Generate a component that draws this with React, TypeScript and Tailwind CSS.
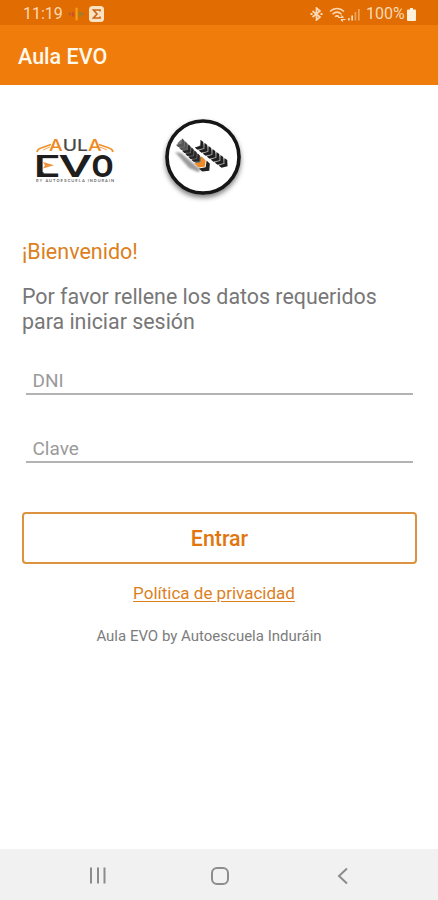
type FieldProps = {
  label: string;
  type: "text" | "password";
};

const LEFT_TRACK = [0, 1, 2, 3, 4, 5];
const RIGHT_TRACK = [0, 1, 2, 3, 4, 5, 6];

function StatusBar() {
  return (
    <div className="flex h-[25px] items-center bg-[#e06c02] pl-[23px] pr-[22px] pt-[3px] text-[#fbd9b4]">
      <span className="w-[40px] whitespace-nowrap text-[16px] leading-none">11:19</span>
      <svg className="ml-[5px]" width="16" height="16" viewBox="0 0 16 16" aria-hidden>
        <circle cx="2" cy="8" r="1.3" fill="#a8604c" />
        <rect x="4.2" y="6" width="2" height="5" rx="1" fill="#d94a25" />
        <rect x="7.6" y="1.5" width="2" height="13" rx="1" fill="#f2a516" />
        <rect x="11" y="5.5" width="2" height="5.5" rx="1" fill="#7e8c3c" />
        <circle cx="15" cy="8" r="1" fill="#8d7550" />
      </svg>
      <svg className="ml-[5px]" width="15" height="16" viewBox="0 0 15 16" aria-hidden>
        <rect width="15" height="16" rx="3.5" fill="#fde3c4" />
        <path d="M11 5.5V4H4.5L8 8l-3.5 4H11v-1.5" fill="none" stroke="#c9681a" strokeWidth="1.7" />
      </svg>
      <div className="ml-auto flex items-center">
        <svg width="13" height="14" viewBox="0 0 13 14" fill="none" stroke="currentColor" strokeWidth="1.7" aria-hidden>
          <path d="M2.5 4l7.5 6-3.5 3V1L10 4l-7.5 6" />
          <path d="M.5 7h2M10.5 7h2" strokeWidth="1.8" />
        </svg>
        <svg className="ml-[6px]" width="18" height="15" viewBox="0 0 18 15" fill="none" stroke="currentColor" aria-hidden>
          <path d="M1 4.5C5 .6 11 .6 15 4.5M3.5 7.2c2.8-2.6 6.2-2.6 9 0M6 9.8c1.4-1.2 2.8-1.2 4 0" strokeWidth="1.5" />
          <path d="M9 10.5h5.5M12 8.5l2.5 2M16.5 12.5H12M14 14.5l-2-2" strokeWidth="1.2" />
        </svg>
        <svg className="ml-[1px]" width="12" height="13" viewBox="0 0 12 13" fill="currentColor" aria-hidden>
          <path d="M0 10h1.7v2.5H0zM3.3 7.5H5v5H3.3z" />
          <path d="M6.6 4h1.7v8.5H6.6zM10 1h1.7v11.5H10z" opacity=".5" />
        </svg>
        <span className="ml-[6px] w-[38px] whitespace-nowrap text-[16px] leading-none">100%</span>
        <svg className="ml-[3px]" width="9" height="13" viewBox="0 0 9 13" fill="#fff0dc" aria-hidden>
          <path d="M3 0h3v1.5h2q1 0 1 1V12q0 1-1 1H1q-1 0-1-1V2.5q0-1 1-1h2z" />
        </svg>
      </div>
    </div>
  );
}

function AulaLogo() {
  return (
    <svg width="82" height="58" viewBox="0 -8 82 58" aria-label="Aula EVO">
      <g fill="none" stroke="#ef922c" strokeWidth="1.7">
        <path d="M3 14q.5-3 4-4l10-3.5" />
        <path d="M79 14q-.5-3-4-4L65 6.5" />
      </g>
      <path d="M9 12l7-3M73 12l-7-3" stroke="#f4b26a" strokeWidth="1.2" />
      <text x="0" y="13" transform="translate(15 0) scale(1.21 1)" fontFamily="Inter, sans-serif" fontSize="16" fontWeight="500" fill="#4a4a4a">
        <tspan fill="#ee8a1e">A</tspan>UL<tspan fill="#ee8a1e">A</tspan>
      </text>
      <g fontFamily="Roboto, sans-serif" fontSize="32" fontWeight="700" fill="#1e1e1e">
        <text transform="translate(.2 38.5) scale(1.38 1)">E</text>
        <text transform="translate(25 38.5) scale(1.58 1)" fontWeight="500">V</text>
        <text transform="translate(57.5 38.5)">O</text>
      </g>
      <rect x="8.6" y="20.2" width="17" height="14" fill="#fff" />
      <path d="M9 24l11 3.200-11 3.200 2-3.200z" fill="#f0913a" />
      <text x="2" y="44" fontFamily="Inter, sans-serif" fontSize="4" fontWeight="500" fill="#555" textLength="78">
        BY AUTOESCUELA INDURAIN
      </text>
    </svg>
  );
}

function TrackBadge() {
  return (
    <svg width="90" height="92" viewBox="0 0 90 92" aria-hidden>
      <defs>
        <filter id="badge-shadow" x="-20%" y="-20%" width="140%" height="140%">
          <feDropShadow dx="0" dy="3" stdDeviation="2.5" floodOpacity=".5" />
        </filter>
        <filter id="soft">
          <feGaussianBlur stdDeviation="1.2" />
        </filter>
      </defs>
      <circle cx="45" cy="44" r="36" fill="#fff" stroke="#161616" strokeWidth="3.6" filter="url(#badge-shadow)" />
      <path d="M17 39l6 1 20 17-3 2-9-4z" fill="#999" filter="url(#soft)" />
      <g transform="translate(22.5 30) rotate(44)">
        <path d="M-2-3L0-4h28v8H0l-2-2z" fill="#777" />
        {LEFT_TRACK.map((i) => (
          <path
            key={i}
            d="M-2-4.5H1L5 0 1 4.5H-2L1.5 0z"
            transform={`translate(${i * 4.3} 0)`}
            fill={i < 2 ? "#555" : "#262626"}
          />
        ))}
        <path d="M24-5h6l4 5-4 5h-6l4-5z" fill="#f08a24" />
        <path d="M31-5.5h4.5l4.5 5.5-4.5 5.5H31l4-5.5z" fill="#222" />
      </g>
      <g transform="translate(42 32.5) rotate(37)">
        <path d="M-1-3.5h31v7.5H0z" fill="#b8b8b8" />
        {RIGHT_TRACK.map((i) => (
          <path
            key={i}
            d="M-3-4.800H.5L4.500 0 .5 4.800H-3L.5 0z"
            transform={`translate(${i * 5} 0)`}
            fill="#1f1f1f"
          />
        ))}
      </g>
    </svg>
  );
}

function Field({ label, type }: FieldProps) {
  return (
    <input
      type={type}
      placeholder={label}
      aria-label={label}
      className="mx-1 block h-[28px] w-[387px] border-b-2 border-[#b3b3b3] bg-transparent pl-[6.5px] pt-[3px] text-[19px] outline-none placeholder:text-[#9a9a9a]"
    />
  );
}

function NavBar() {
  return (
    <nav className="flex h-[51px] items-center bg-[#f1f1f1] pl-[89px] pt-[2px] text-[#8c8c8c]">
      <svg width="18" height="17" viewBox="0 0 18 17" stroke="currentColor" strokeWidth="2" aria-hidden>
        <path d="M2 .5v16M9 .5v16M15.5 .5v16" />
      </svg>
      <svg className="ml-[104px]" width="18" height="18" viewBox="0 0 18 18" fill="none" stroke="currentColor" strokeWidth="2" aria-hidden>
        <rect x="1" y="1" width="16" height="16" rx="5" />
      </svg>
      <svg className="ml-[108px]" width="12" height="18" viewBox="0 0 12 18" fill="none" stroke="currentColor" strokeWidth="2" aria-hidden>
        <path d="M10 1.5L2 9l8 7.5" />
      </svg>
    </nav>
  );
}

export default function App() {
  return (
    <div className="flex h-[900px] w-[438px] flex-col bg-white font-[Roboto,sans-serif]">
      <StatusBar />
      <header className="flex h-[60px] items-center bg-[#f07d0b] pl-[18px] pt-[4px]">
        <h1 className="whitespace-nowrap text-[21.5px] font-medium leading-none text-[#fff8ec]">Aula EVO</h1>
      </header>

      <main className="flex flex-1 flex-col px-[22px]">
        <div className="flex h-[150px] items-start pl-[12px] pt-[28px]">
          <div className="pt-[17px]">
            <AulaLogo />
          </div>
          <div className="ml-[42px]">
            <TrackBadge />
          </div>
        </div>

        <h2 className="mt-[4px] h-[25px] text-[21.5px] leading-[25px] text-[#dc7f1e]">¡Bienvenido!</h2>
        <p className="mt-[20px] h-[50px] whitespace-nowrap text-[21.4px] leading-[25px] text-[#777]">
          Por favor rellene los datos requeridos
          <br />
          para iniciar sesión
        </p>

        <form className="flex flex-col">
          <div className="mt-[33px]">
            <Field label="DNI" type="text" />
          </div>
          <div className="mt-[40px]">
            <Field label="Clave" type="password" />
          </div>
          <button
            type="button"
            className="mt-[49px] h-[52px] w-[395px] rounded-[4px] border-2 border-[#dc933f] pt-[2px] text-[21.4px] font-medium text-[#e0760d]"
          >
            Entrar
          </button>
        </form>

        <a href="#" className="mt-[19px] self-center text-[17px] leading-[20px] text-[#dc7f1e] underline underline-offset-2 -translate-x-[5px]">
          Política de privacidad
        </a>
        <p className="mt-[24px] -translate-x-[10px] self-center text-[15px] leading-[18px] text-[#7c7c7c]">
          Aula EVO by Autoescuela Induráin
        </p>
      </main>

      <NavBar />
    </div>
  );
}
